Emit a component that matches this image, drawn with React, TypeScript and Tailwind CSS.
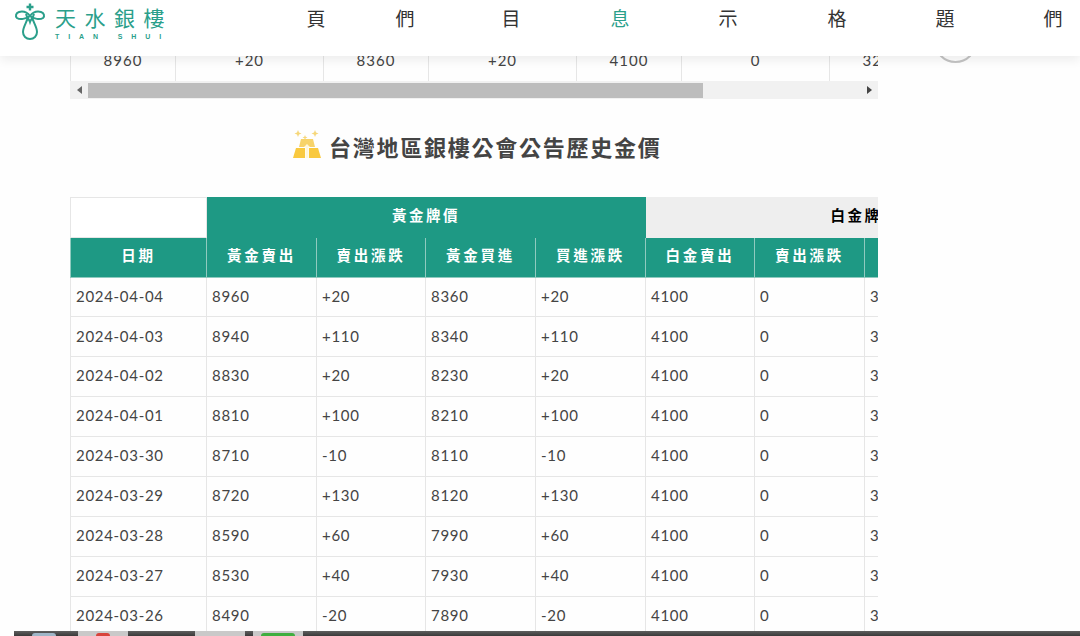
const rows = [
  ['2024-04-04', '8960', '+20', '8360', '+20'],
  ['2024-04-03', '8940', '+110', '8340', '+110'],
  ['2024-04-02', '8830', '+20', '8230', '+20'],
  ['2024-04-01', '8810', '+100', '8210', '+100'],
  ['2024-03-30', '8710', '-10', '8110', '-10'],
  ['2024-03-29', '8720', '+130', '8120', '+130'],
  ['2024-03-28', '8590', '+60', '7990', '+60'],
  ['2024-03-27', '8530', '+40', '7930', '+40'],
  ['2024-03-26', '8490', '-20', '7890', '-20'],
];

const heads = ['日期', '黃金賣出', '賣出漲跌', '黃金買進', '買進漲跌', '白金賣出', '賣出漲跌', '白金買進', '買進漲跌'];
const colWidths = [136, 110, 109, 110, 110, 109, 110, 109, 110];
const topRow = ['8960', '+20', '8360', '+20', '4100', '0', '3200'];
const topWidths = ['w-[105px]', 'w-[148px]', 'w-[105px]', 'w-[148px]', 'w-[105px]', 'w-[148px]', 'w-[105px]'];
const nav = [
  { label: '頁', gap: 'ml-0' },
  { label: '們', gap: 'ml-[69px]' },
  { label: '目', gap: 'ml-[86px]' },
  { label: '息', gap: 'ml-[89px]', active: true },
  { label: '示', gap: 'ml-[88px]' },
  { label: '格', gap: 'ml-[89px]' },
  { label: '題', gap: 'ml-[88px]' },
  { label: '們', gap: 'ml-[88px]' },
];

const Logo = () => (
  <div className="flex w-[306px] shrink-0 items-start pl-[13px] pt-[3px] text-[#2b9f8b]">
    <svg width="34" height="38" viewBox="0 0 34 38" fill="none" stroke="currentColor" strokeWidth="2">
      <path d="M17 0.500v7M13.500 4h7" strokeWidth="2.400" />
      <path d="M17 13c-3-4-7-5-11-4-3 1-4 4-2 6 3 2 9 1 13-2 4 3 10 4 13 2 2-2 1-5-2-6-4-1-8 0-11 4z" />
      <path d="M15 14c-1 5-5 10-5 15 0 4 3 7 7 7s7-3 7-7c0-5-4-10-5-15" />
      <path d="M13 11c1 4 3 5 4 8 1-3 3-4 4-8" />
    </svg>
    <div className="ml-[8px] flex flex-col">
      <span className="whitespace-nowrap text-[21px] leading-[29px] tracking-[8.500px]">天水銀樓</span>
      <span className="whitespace-nowrap font-['Liberation_Sans',sans-serif] text-[7px] font-bold leading-[9px] tracking-[8.900px]">TIAN SHUI</span>
    </div>
  </div>
);

const GoldIcon = () => (
  <svg width="28" height="29" viewBox="0 0 28 29" className="shrink-0">
    <path d="M5 1l1 2.500 2.500 1-2.500 1-1 2.500-1-2.500-2.500-1 2.500-1zM12 6l.7 1.800 1.800.7-1.800.7-.7 1.800-.7-1.800-1.800-.7 1.800-.7zM22 1l1 2.500 2.500 1-2.500 1-1 2.500-1-2.500-2.500-1 2.500-1z" fill="#f6d77a" />
    <path d="M8 10h12l2 8H6z" fill="#f7d36a" />
    <path d="M3 19h9v10H0z" fill="#f9c93f" />
    <path d="M16 19h9l3 10H16z" fill="#f9c93f" />
    <path d="M14 15l3 3h-1.500v11h-3v-11H11z" fill="#fff7dc" />
  </svg>
);

export default function App() {
  return (
    <div className="relative h-[636px] overflow-hidden bg-[#fefefe] font-['Lato','Noto_Sans_CJK_TC',sans-serif] text-[#444]">
      <header className="relative z-10 flex h-14 overflow-hidden bg-white font-['Noto_Sans_CJK_TC',sans-serif] shadow-[0_4px_10px_rgba(0,0,0,0.07)]">
        <Logo />
        {nav.map((item, i) => (
          <div
            key={i}
            className={`${item.gap} w-[20px] shrink-0 pt-[5px] text-center text-[19px] leading-[26px] ${item.active ? 'text-[#2b9f8b]' : 'text-[#333]'}`}
          >
            {item.label}
          </div>
        ))}
      </header>

      {/* circle button mostly under the header */}
      <div className="absolute left-[934px] top-[20px] h-[43px] w-[43px] rounded-full border-2 border-[#c4c4c4]" />

      <div className="ml-[70px] w-[808px] overflow-hidden">
        <div className="flex h-[25px] w-[900px] border-l border-[#e6e6e6]">
          {topRow.map((v, i) => (
            <div key={i} className={`${topWidths[i]} shrink-0 border-r border-[#e6e6e6] text-center text-[15px] leading-[9px] tracking-[1px]`}>
              {v}
            </div>
          ))}
        </div>

        <div className="flex h-[18px] items-center bg-[#f1f1f1]">
          <div className="flex w-[18px] justify-center">
            <div className="h-0 w-0 border-y-4 border-r-[5px] border-y-transparent border-r-[#666]" />
          </div>
          <div className="h-[15px] w-[615px] bg-[#bdbdbd]" />
          <div className="flex-1" />
          <div className="flex w-[18px] justify-center">
            <div className="h-0 w-0 border-y-4 border-l-[5px] border-y-transparent border-l-[#444]" />
          </div>
        </div>
      </div>

      <h2 className="ml-[293px] mt-[28px] flex h-[32px] items-center gap-2 font-['Noto_Sans_CJK_TC',sans-serif] text-[22px] font-bold tracking-[1.750px] text-[#444]">
        <GoldIcon />
        <span className="mt-[6px] whitespace-nowrap">台灣地區銀樓公會公告歷史金價</span>
      </h2>

      <div className="ml-[70px] mt-[38px] w-[808px] overflow-hidden">
        <table className="w-[913px] table-fixed border-collapse">
          <colgroup>
            {colWidths.map((w, i) => (
              <col key={i} style={{ width: w }} />
            ))}
          </colgroup>
          <thead className="font-['Noto_Sans_CJK_TC',sans-serif]">
            <tr className="h-[39.500px]">
              <th className="border border-[#e6e6e6] bg-white" />
              <th colSpan={4} className="border border-[#1e9984] bg-[#1e9984] pb-[5px] text-center text-[14.500px] font-bold tracking-[2.500px] text-white">
                黃金牌價
              </th>
              <th colSpan={4} className="border border-[#eeeeee] bg-[#eeeeee] pb-[5px] text-center text-[14.500px] font-bold tracking-[2.500px] text-black">
                白金牌價
              </th>
            </tr>
            <tr className="h-[40px]">
              {heads.map((h, i) => (
                <th key={i} className="border border-[#8fcabf] bg-[#1e9984] pb-[4px] text-center text-[14.500px] font-bold tracking-[2.750px] text-white">
                  {h}
                </th>
              ))}
            </tr>
          </thead>
          <tbody>
            {rows.map((r) => (
              <tr key={r[0]} className="h-[39.900px]">
                {r.map((v, i) => (
                  <td key={i} className="border border-[#e6e6e6] px-[5px] pb-[2px] text-[15px] tracking-[0.700px]">
                    {v}
                  </td>
                ))}
                <td className="border border-[#e6e6e6] px-[5px] pb-[2px] text-[15px] tracking-[0.700px]">4100</td>
                <td className="border border-[#e6e6e6] px-[5px] pb-[2px] text-[15px] tracking-[0.700px]">0</td>
                <td className="border border-[#e6e6e6] px-[5px] pb-[2px] text-[15px] tracking-[0.700px]">3200</td>
                <td className="border border-[#e6e6e6] px-[5px] pb-[2px] text-[15px] tracking-[0.700px]">0</td>
              </tr>
            ))}
          </tbody>
        </table>
      </div>

      {/* strip of a desktop taskbar caught at the bottom edge */}
      <div className="absolute bottom-0 left-[14px] right-0 flex h-[5px] items-end bg-gradient-to-b from-[#5f5f5f] to-[#3a3a3a]">
        <div className="ml-[18px] h-[3px] w-[24px] rounded-t-full bg-[#9fb6c8]" />
        <div className="ml-[22px] flex h-[5px] w-[50px] justify-center bg-[#c9c9c9]">
          <div className="mt-[2px] h-[3px] w-[14px] rounded-t-full bg-[#d8433b]" />
        </div>
        <div className="ml-[67px] h-[5px] w-[50px] bg-[#c9c9c9]" />
        <div className="ml-[8px] flex h-[5px] w-[50px] justify-center bg-[#c9c9c9]">
          <div className="mt-[2px] h-[3px] w-[34px] rounded-t bg-[#3fae3f]" />
        </div>
      </div>
    </div>
  );
}
